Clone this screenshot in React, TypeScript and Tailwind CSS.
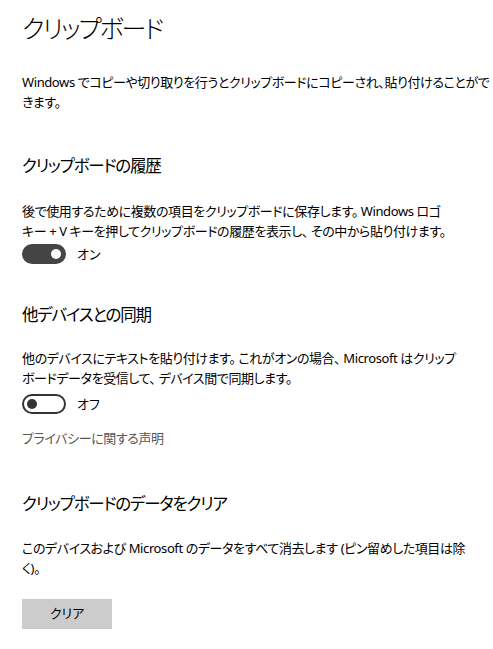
// Windows Settings — Clipboard page

const font = "font-['Noto_Sans','Noto_Sans_CJK_JP',sans-serif] [font-feature-settings:'palt']";
const body = "text-[13px] leading-[20px] tracking-[-0.4px] whitespace-nowrap";

function Toggle({ on, label }: { on: boolean; label: string }) {
  return (
    <div className="flex h-[20px] items-center gap-[11px]">
      {on ? (
        <div className="flex h-[20px] w-[44px] items-center justify-end rounded-full bg-[#444] pr-[5px]">
          <div className="h-[10px] w-[10px] rounded-full bg-white" />
        </div>
      ) : (
        <div className="flex h-[20px] w-[44px] items-center rounded-full border-2 border-[#333] pl-[3px]">
          <div className="h-[10px] w-[10px] rounded-full bg-[#333]" />
        </div>
      )}
      <span className="text-[13px] leading-[20px] text-black">{label}</span>
    </div>
  );
}

function Heading({ children, className = "" }: { children: React.ReactNode; className?: string }) {
  return (
    <h2 className={`text-[16.5px] leading-[28px] font-normal tracking-[-1.2px] text-black ${className}`}>
      {children}
    </h2>
  );
}

export default function App() {
  return (
    <div className={`${font} min-h-[649px] w-[493px] bg-white px-[22px] pt-[10px] text-black`}>
      <h1 className="text-[25px] leading-[36px] font-light tracking-[-2px]">クリップボード</h1>

      <p className={`mt-[26px] ${body}`}>
        Windows でコピーや切り取りを行うとクリップボードにコピーされ、貼り付けることがで
        <br />
        きます。
      </p>

      {/* ---- History ---- */}
      <Heading className="mt-[40px]">クリップボードの履歴</Heading>
      <p className={`mt-[21px] ${body}`}>
        後で使用するために複数の項目をクリップボードに保存します。 Windows ロゴ
        <br />
        キー + V キーを押してクリップボードの履歴を表示し、 その中から貼り付けます。
      </p>
      <div className="mt-[3px]">
        <Toggle on label="オン" />
      </div>

      {/* ---- Sync ---- */}
      <Heading className="mt-[37px]">他デバイスとの同期</Heading>
      <p className={`mt-[19px] ${body}`}>
        他のデバイスにテキストを貼り付けます。 これがオンの場合、 Microsoft はクリップ
        <br />
        ボードデータを受信して、 デバイス間で同期します。
      </p>
      <div className="mt-[6px]">
        <Toggle on={false} label="オフ" />
      </div>
      <p className="mt-[14px] text-[13px] leading-[20px] tracking-[-0.4px] text-[#555]">
        プライバシーに関する声明
      </p>

      {/* ---- Clear ---- */}
      <Heading className="mt-[42px]">クリップボードのデータをクリア</Heading>
      <p className={`mt-[20px] ${body}`}>
        このデバイスおよび Microsoft のデータをすべて消去します (ピン留めした項目は除
        <br />
        く)。
      </p>
      <button className="mt-[21px] h-[30px] w-[90px] bg-[#ccc] text-[13px] text-black">クリア</button>
    </div>
  );
}
